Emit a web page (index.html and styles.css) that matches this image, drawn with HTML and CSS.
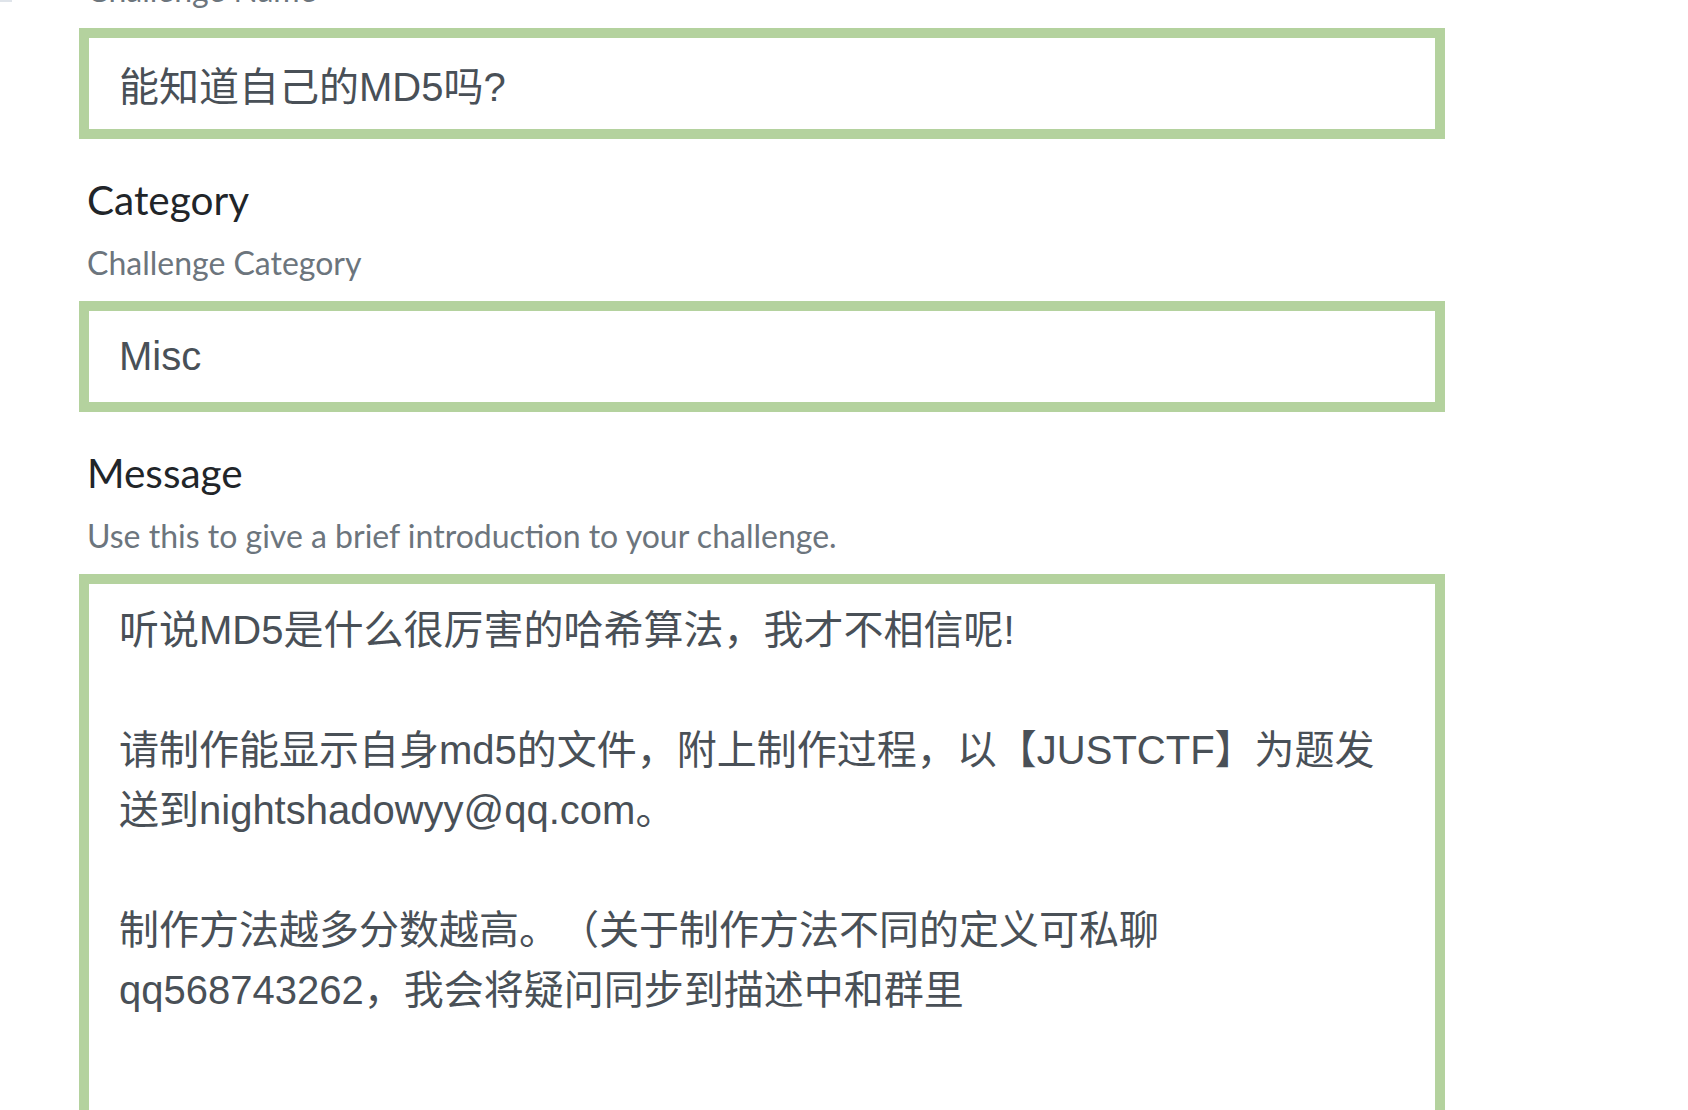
FILE: index.html
```html
<!DOCTYPE html>
<html lang="zh-CN">
<head>
<meta charset="utf-8">
<title>Challenge</title>
<link rel="stylesheet" href="styles.css">
</head>
<body>
<div class="edge-mark"></div>
<form class="challenge-form">
  <div class="form-group first">
    <small class="help">Challenge Name</small>
    <input class="field" type="text" value="能知道自己的MD5吗?">
  </div>
  <div class="form-group">
    <label class="label">Category</label>
    <small class="help">Challenge Category</small>
    <input class="field" type="text" value="Misc">
  </div>
  <div class="form-group">
    <label class="label">Message</label>
    <small class="help">Use this to give a brief introduction to your challenge.</small>
    <textarea class="field area">听说MD5是什么很厉害的哈希算法，我才不相信呢!

请制作能显示自身md5的文件，附上制作过程，以【JUSTCTF】为题发送到nightshadowyy@qq.com。

制作方法越多分数越高。（关于制作方法不同的定义可私聊qq568743262，我会将疑问同步到描述中和群里</textarea>
  </div>
</form>
</body>
</html>
```
FILE: styles.css
```css
html, body {
  margin: 0;
  padding: 0;
  overflow: hidden;
  background: #ffffff;
  height: 100%;
}

.edge-mark {
  position: absolute;
  top: 0;
  left: 0;
  width: 12px;
  height: 2px;
  background: #dfe4ea;
}

.challenge-form {
  width: 1366px;
  margin: 0 0 0 79px;
  display: flex;
  flex-direction: column;
}

.form-group {
  display: flex;
  flex-direction: column;
  margin-top: 31px;
}

.form-group.first {
  margin-top: -34px;
}

.label {
  display: block;
  font-family: Lato, "Noto Sans", sans-serif;
  font-size: 40.5px;
  line-height: 60px;
  color: #212529;
  padding-left: 8px;
  margin-bottom: 9px;
}

.help {
  display: block;
  font-family: Lato, "Noto Sans", sans-serif;
  font-size: 32px;
  line-height: 48px;
  color: #6c757d;
  padding-left: 8px;
  margin-bottom: 14px;
}

.field {
  display: block;
  box-sizing: border-box;
  width: 100%;
  height: 111px;
  margin: 0;
  padding: 15px 30px;
  border: 10px solid #b4d29e;
  border-radius: 0;
  outline: none;
  background: #ffffff;
  font-family: "Liberation Sans", "Noto Sans CJK SC", sans-serif;
  font-size: 40px;
  line-height: 60px;
  color: #495057;
}

.area {
  height: 640px;
  resize: none;
  overflow: hidden;
  padding-top: 16px;
  text-spacing-trim: space-all;
}
```
